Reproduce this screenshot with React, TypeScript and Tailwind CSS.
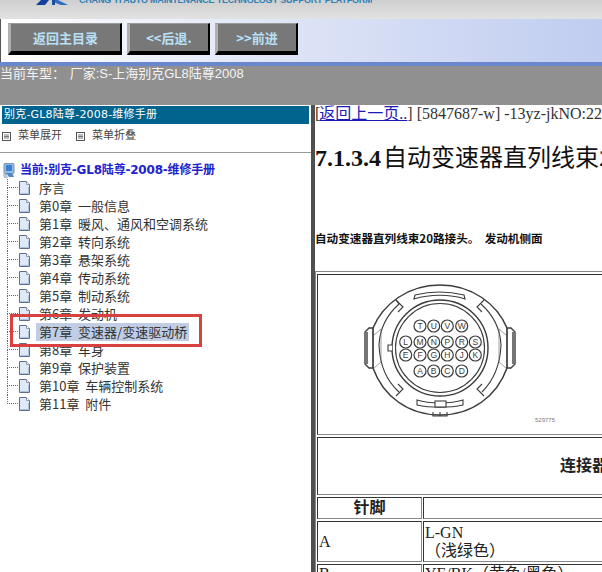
const CJK = '"Noto Sans CJK SC", sans-serif';
const Doc = () => (
  <svg width="13" height="16" viewBox="0 0 13 16" className="shrink-0">
    <path d="M1.5 1.5H8.5L11.5 4.5V14.5H1.5Z" fill="#dfe9f8" stroke="#5f6f88" />
    <path d="M8.5 1.5V4.5H11.5" fill="#ffffff" stroke="#8a98ad" />
    <path d="M2.5 13.5H10.5V7" fill="none" stroke="#a9c0e4" />
  </svg>
);
const MenuIcon = () => (
  <svg width="9" height="9" viewBox="0 0 9 9" className="shrink-0">
    <rect x="0.5" y="0.5" width="8" height="8" fill="#fff" stroke="#555" />
    <path d="M2 3H7M2 4.5H7M2 6H7" stroke="#555" strokeWidth="0.8" />
  </svg>
);
const chapters = [
  "序言",
  "第0章  一般信息",
  "第1章  暖风、通风和空调系统",
  "第2章  转向系统",
  "第3章  悬架系统",
  "第4章  传动系统",
  "第5章  制动系统",
  "第6章  发动机",
  "第7章  变速器/变速驱动桥",
  "第8章  车身",
  "第9章  保护装置",
  "第10章  车辆控制系统",
  "第11章  附件",
];
const pins: [string, number, number][] = [
  ["T", 420, 326], ["U", 433.7, 326], ["V", 447.3, 326], ["W", 461.7, 326],
  ["L", 405.7, 342], ["M", 420, 342], ["N", 433.7, 342], ["P", 447.3, 342], ["R", 461.7, 342], ["S", 475.3, 342],
  ["E", 405.7, 355], ["F", 420, 355], ["G", 433.7, 355], ["H", 447.3, 355], ["J", 461.7, 355], ["K", 475.3, 355],
  ["A", 420, 371], ["B", 433.7, 371], ["C", 447.3, 371], ["D", 461.7, 371],
];
const Connector = () => (
  <svg width="220" height="150" viewBox="340 280 220 150" className="block ml-[22px]" fill="none" stroke="#3c3c3c" strokeWidth="1.1">
    <path d="M373 328C383 304 408 285 440 285C472 285 497 304 507 328M507 368C497 396 472 415 440 415C408 415 383 396 373 368" strokeWidth="1.5" />
    <path d="M373 328H369L365 332V364L369 368H373ZM507 328H511L515 332V364L511 368H507Z" strokeWidth="1.4" />
    <path d="M367 332V364M513 332V364" strokeWidth="1.4" />
    <path d="M373 328V368M507 328V368" />
    <path d="M379 345C380 325 390 312 399 304L396 300M481 304C490 312 500 325 501 345C500 370 490 384 482 392M399 392C390 384 380 370 379 345" />
    <path d="M396 300L403 307L398 312M484 300L477 307L482 312M396 396L403 389L398 384M484 396L477 389L482 384" />
    <path d="M414 299C430 294 450 294 465 299L464 295C448 291 431 291 415 295Z" />
    <path d="M417 400C430 404 450 404 463 400L463 405C450 408 430 408 417 405Z" />
    <rect x="435" y="401" width="11" height="6" fill="#fff" />
    <path d="M433 412V416H447V412M440 412V416" />
    <path d="M374 335L381 329V362L374 368M506 335L499 329V362L506 368" strokeWidth="0.7" stroke="#777" />
    <circle cx="440" cy="348" r="48" strokeWidth="1.4" />
    <circle cx="440" cy="348" r="44.5" />
    <path d="M392 345H388V351H392" fill="#fff" />
    <text x="535" y="422" fontSize="6" fill="#777" stroke="none" fontFamily='"Liberation Sans", sans-serif'>529775</text>
    {pins.map(([l, x, y]) => (
      <g key={l}>
        <circle cx={x} cy={y} r="6" strokeWidth="1.2" />
        <text x={x} y={y + 3} textAnchor="middle" fontSize="8.5" fill="#3c3c3c" stroke="none" fontFamily='"Liberation Sans", sans-serif'>{l}</text>
      </g>
    ))}
  </svg>
);
const cell = "border border-t-[#333] border-l-[#333] border-b-[#888] border-r-[#888] p-0";
export default function App() {
  return (
    <div className="w-[602px] h-[572px] overflow-hidden flex flex-col bg-white" style={{ fontFamily: CJK }}>
      <div className="h-[19px] shrink-0 bg-gradient-to-b from-[#cfcfcf] to-[#e2e2e2] overflow-hidden flex gap-[11px] pl-[36px]">
        <svg width="32" height="5" viewBox="0 0 32 5" className="shrink-0">
          <path d="M5 0H13L9 5H0Z" fill="#123f9c" />
          <path d="M16 0H22L32 5H25L17 2Z" fill="#2f6fc0" />
          <path d="M16 0H19V5H16Z" fill="#1a4fa8" />
        </svg>
        <div className="h-[5px] overflow-hidden flex items-end">
          <span className="text-[9px] leading-[9px] tracking-[-0.2px] font-bold whitespace-nowrap text-[#2f80b4]" style={{ fontFamily: '"Liberation Sans", sans-serif' }}>
            CHANG YI AUTO MAINTENANCE TECHNOLOGY SUPPORT PLATFORM
          </span>
        </div>
      </div>
      <div className="h-[43px] shrink-0 flex items-start gap-[5px] pt-[4px] pl-[7px] border-l border-[#555] bg-gradient-to-r from-[#ffffff] via-[#dde3f6] to-[#c0cdf0]">
        {[["返回主目录", "w-[114px]"], ["<<后退.", "w-[83px]"], [">>前进", "w-[83px]"]].map(([t, w]) => (
          <div key={t} className={`${w} h-[32px] flex items-center justify-center bg-[#787878] border-l-[3px] border-t border-r-[2px] border-b-[4px] border-l-[#b0b0b0] border-t-[#9a9a9a] border-r-black border-b-black text-[13px] font-bold text-[#b8e0f6]`}>
            {t}
          </div>
        ))}
      </div>
      <div className="h-[4px] shrink-0 bg-[#6a86cc]" />
      <div className="h-[39px] shrink-0 bg-[#909090] text-[13px] leading-[15px] text-[#f4f4f4] whitespace-pre" style={{ fontFamily: '"Liberation Sans", ' + CJK }}>
        当前车型： <span className="ml-[1px]">厂家:S-上海别克GL8陆尊2008</span>
      </div>
      <div className="flex-1 flex min-h-0">
        <div className="relative w-[311px] shrink-0 bg-white pt-px" style={{ fontFamily: '"DejaVu Sans", ' + CJK }}>
          <div className="h-[18px] mx-[2px] bg-[#00648f] text-white text-[11px] leading-[18px] tracking-[0.2px] pl-[2px] whitespace-nowrap">别克-GL8陆尊-2008-维修手册</div>
          <div className="h-[22px] pt-[2px] flex items-center pl-[2px] text-[11px] text-[#444]">
            <MenuIcon />
            <span className="ml-[7px]">菜单展开</span>
            <span className="ml-[14px]"><MenuIcon /></span>
            <span className="ml-[7px]">菜单折叠</span>
          </div>
          <div className="mt-[6px] border-t border-[#999]" />
          <div className="mt-[8px] h-[18px] flex items-center pl-[3px] gap-[5px]">
            <svg width="12" height="15" viewBox="0 0 12 15" className="shrink-0">
              <rect x="1" y="0.5" width="10" height="10" rx="1" fill="#8fbcea" stroke="#7c8ea8" />
              <rect x="3" y="2" width="6" height="6" fill="#3c7fd0" />
              <path d="M3 10L6 14H11L9 10Z" fill="#4f86c8" />
              <path d="M0 11H4L5 15H1Z" fill="#b8c4d4" />
            </svg>
            <span className="text-[12px] font-bold tracking-[-0.2px] text-[#2222cc] whitespace-nowrap">当前:别克-GL8陆尊-2008-维修手册</span>
          </div>
          <div className="ml-[7px]" style={{ fontFamily: CJK }}>
            {chapters.map((c, i) => (
              <div key={c} className="flex items-center h-[18px]">
                <div className="w-[11px] h-[18px] shrink-0">
                  <div className="h-[9px] border-l border-b border-dotted border-[#666]" />
                  {i < chapters.length - 1 && <div className="h-[9px] border-l border-dotted border-[#666]" />}
                </div>
                <Doc />
                <span className={`ml-[5px] h-[18px] pl-[3px] text-[13px] leading-[17px] text-[#333] whitespace-pre ${i === 8 ? "bg-[#c0cde4] pr-[2px]" : ""}`}>{c}</span>
              </div>
            ))}
          </div>
          <div className="absolute left-[10px] top-[209px] w-[192px] h-[33px] border-[3px] border-[#d94040]" />
        </div>
        <div className="w-[4px] shrink-0 bg-[#505050]" />
        <div className="flex-1 min-w-0 overflow-hidden bg-white">
          <div className="h-[18px] text-[16px] leading-[18px] whitespace-nowrap text-[#333]" style={{ fontFamily: '"Liberation Serif", ' + CJK }}>
            [<a className="text-[#1a1ab4] underline ml-[-1px]">返回上一页..</a>] [5847687-w] -13yz-jkNO:22
          </div>
          <div className="mt-[21px] h-[28px] text-[24px] leading-[28px] font-bold whitespace-nowrap text-[#111]" style={{ fontFamily: '"Liberation Serif", ' + CJK }}>
            7.1.3.4<span className="font-normal ml-[2px]">自动变速器直列线束20路接头</span>
          </div>
          <div className="mt-[58px] h-[16px] text-[11.6px] leading-[16px] font-bold whitespace-pre text-[#111]">自动变速器直列线束20路接头。  发动机侧面</div>
          <table className="mt-[25px] w-[602px] table-fixed border-separate [border-spacing:1px_2px] border border-t-[#888] border-l-[#888] border-b-[#333] border-r-[#333] text-[16px] leading-[18px] text-[#222]" style={{ fontFamily: '"Liberation Serif", ' + CJK }}>
            <colgroup>
              <col className="w-[105px]" />
              <col />
            </colgroup>
            <tbody>
              <tr>
                <td colSpan={2} className={`${cell} h-[161px] align-top`}><div className="pt-[5px]"><Connector /></div></td>
              </tr>
              <tr>
                <td colSpan={2} className={`${cell} h-[58px] text-center font-bold`}>连接器部件信息</td>
              </tr>
              <tr>
                <td className={`${cell} h-[22px] text-center font-bold`}>针脚</td>
                <td className={cell} />
              </tr>
              <tr>
                <td className={`${cell} h-[41px] pl-[1px]`}>A</td>
                <td className={`${cell} pl-[1px]`}>L-GN<br />（浅绿色）</td>
              </tr>
              <tr>
                <td className={`${cell} h-[41px] pl-[1px] align-top`}>B</td>
                <td className={`${cell} pl-[1px] align-top`}>YE/BK（黄色/黑色）</td>
              </tr>
            </tbody>
          </table>
        </div>
      </div>
    </div>
  );
}
